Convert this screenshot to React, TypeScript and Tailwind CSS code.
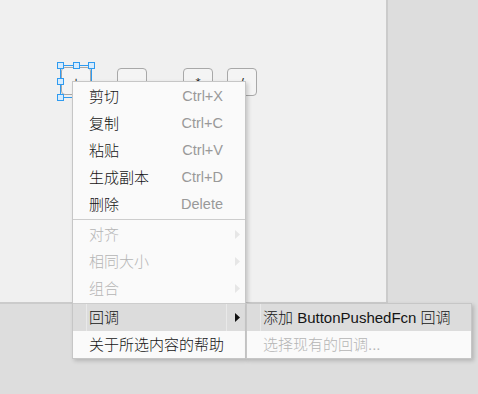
import React from "react";

type Item = {
  label: string;
  shortcut?: string;
  disabled?: boolean;
  submenu?: boolean;
  active?: boolean;
};

const GROUPS: Item[][] = [
  [
    { label: "剪切", shortcut: "Ctrl+X" },
    { label: "复制", shortcut: "Ctrl+C" },
    { label: "粘贴", shortcut: "Ctrl+V" },
    { label: "生成副本", shortcut: "Ctrl+D" },
    { label: "删除", shortcut: "Delete" },
  ],
  [
    { label: "对齐", disabled: true, submenu: true },
    { label: "相同大小", disabled: true, submenu: true },
    { label: "组合", disabled: true, submenu: true },
  ],
  [
    { label: "回调", submenu: true, active: true },
    { label: "关于所选内容的帮助" },
  ],
];

const SUB_ITEMS: Item[] = [
  { label: "添加 ButtonPushedFcn 回调", active: true },
  { label: "选择现有的回调...", disabled: true },
];

function Arrow({ dim }: { dim?: boolean }) {
  return (
    <svg width="5" height="9" viewBox="0 0 5 9" aria-hidden>
      <path d="M0 0 L5 4.5 L0 9 Z" fill={dim ? "#e6e6e6" : "#111111"} />
    </svg>
  );
}

function Row({ item, sub }: { item: Item; sub?: boolean }) {
  return (
    <div
      className={[
        "flex h-[27px] items-stretch",
        item.active ? "bg-[#dcdcdc]" : "",
      ].join(" ")}
    >
      <span className="w-[13px]" />
      <span className={["w-px", item.active ? "bg-[#e9e9e9]" : ""].join(" ")} />
      <span
        className={[
          "flex flex-1 items-center whitespace-nowrap pl-[2px]",
          item.disabled ? "text-[#b5b5b5]" : "text-[#141414]",
        ].join(" ")}
      >
        {item.label}
      </span>
      {item.shortcut ? (
        <span className="flex items-center pr-[22px] text-[14.5px] text-[#999999]">{item.shortcut}</span>
      ) : null}
      {item.submenu ? (
        <>
          <span className={["w-px", item.active ? "bg-[#e9e9e9]" : ""].join(" ")} />
          <span className="flex w-[18px] items-center pl-[8px]">
            <Arrow dim={item.disabled} />
          </span>
        </>
      ) : null}
      {sub ? <span className="w-[4px]" /> : null}
    </div>
  );
}

function CalcButton({ label, className }: { label: string; className: string }) {
  return (
    <div
      className={[
        "absolute flex h-[28px] w-[30px] items-center justify-center rounded-[4px] border border-[#a8a8a8] bg-[#f4f4f4] text-[13px] text-[#222]",
        className,
      ].join(" ")}
    >
      {label}
    </div>
  );
}

export default function App() {
  const font = { fontFamily: '"Liberation Sans", "Noto Sans CJK SC", sans-serif' };

  return (
    <div
      className="relative h-[394px] w-[478px] overflow-hidden bg-[#dddddd] text-[15px] font-light leading-none"
      style={font}
    >
      <div className="relative h-[304px] w-[388px] border-b-2 border-r-2 border-[#cbcbcb] bg-[#f0f0f0]">
        <CalcButton label="+" className="left-[61px] top-[67px]" />
        <CalcButton label="-" className="left-[117px] top-[68px]" />
        <CalcButton label="*" className="left-[183px] top-[68px]" />
        <CalcButton label="/" className="left-[227px] top-[68px]" />

        {/* selection frame */}
        <div className="absolute left-[60px] top-[65px] h-[33px] w-[32px] border border-[#2f9bf0]">
          {[
            "-left-[4px] -top-[4px]",
            "left-[12px] -top-[4px]",
            "-right-[4px] -top-[4px]",
            "-left-[4px] top-[12px]",
            "-left-[4px] -bottom-[4px]",
          ].map((pos) => (
            <span
              key={pos}
              className={[
                "absolute h-[7px] w-[7px] border border-[#2f9bf0] bg-[#d7ecfd]",
                pos,
              ].join(" ")}
            />
          ))}
        </div>
      </div>

      {/* context menu */}
      <div className="absolute left-[72px] top-[81px] w-[174px] border border-[#c6c6c6] bg-[#fafafa] shadow-[2px_2px_4px_rgba(0,0,0,0.18)]">
        {GROUPS.map((group, gi) => (
          <div
            key={gi}
            className={[
              gi < 2 ? "py-px" : "",
              gi > 0 ? "border-t border-[#cdcdcd]" : "",
            ].join(" ")}
          >
            {group.map((item) => (
              <Row key={item.label} item={item} />
            ))}
          </div>
        ))}
      </div>

      {/* submenu */}
      <div className="absolute left-[246px] top-[303px] w-[226px] border border-[#c6c6c6] bg-[#fafafa] shadow-[2px_2px_4px_rgba(0,0,0,0.18)]">
        {SUB_ITEMS.map((item) => (
          <Row key={item.label} item={item} sub />
        ))}
      </div>
    </div>
  );
}
